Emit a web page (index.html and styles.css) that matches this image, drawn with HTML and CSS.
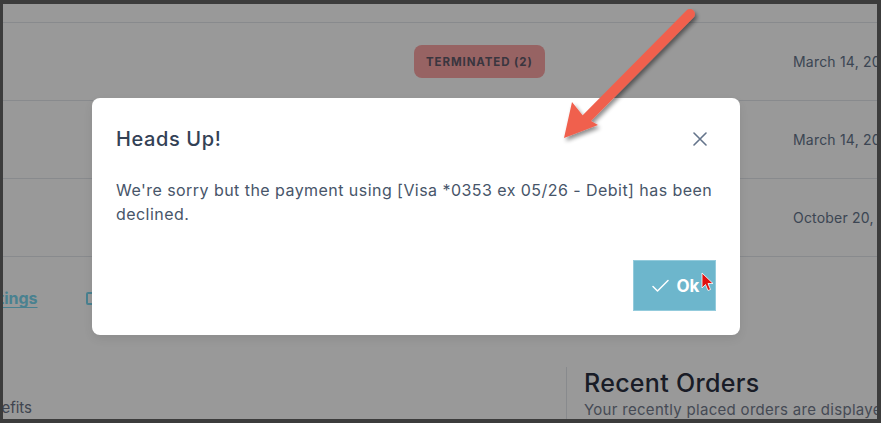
FILE: index.html
```html
<!DOCTYPE html>
<html lang="en">
<head>
<meta charset="utf-8">
<title>Heads Up</title>
<link rel="stylesheet" href="styles.css">
</head>
<body>
<div class="frame">
  <div class="page">
    <div class="table">
      <div class="row">
        <div class="cell"></div>
        <div class="cell"></div>
        <div class="cell date">Date (2)</div>
      </div>
      <div class="row">
        <div class="cell"></div>
        <div class="cell"><span class="badge">TERMINATED (2)</span></div>
        <div class="cell date">March 14, 2024</div>
      </div>
      <div class="row">
        <div class="cell"></div>
        <div class="cell"></div>
        <div class="cell date">March 14, 2024</div>
      </div>
      <div class="row">
        <div class="cell"></div>
        <div class="cell"></div>
        <div class="cell date">October 20, 2023</div>
      </div>
    </div>
    <div class="links">
      <a class="link" href="#">Settings</a>
      <span class="link-icon"></span>
    </div>
    <div class="columns">
      <div class="col-left">
        <div class="left-text">Benefits</div>
      </div>
      <div class="col-right">
        <h2 class="orders-title">Recent Orders</h2>
        <p class="orders-sub">Your recently placed orders are displayed here</p>
      </div>
    </div>
    <div class="overlay"></div>
    <div class="modal">
      <div class="modal-head">
        <h3 class="modal-title">Heads Up!</h3>
        <svg class="close" width="14" height="14" viewBox="0 0 14 14"><path d="M1 1L13 13M13 1L1 13" stroke="#64748b" stroke-width="1.6" stroke-linecap="round" fill="none"/></svg>
      </div>
      <p class="modal-body">We're sorry but the payment using [Visa *0353 ex 05/26 - Debit] has been declined.</p>
      <div class="modal-foot">
        <button class="ok">
          <svg width="17" height="14" viewBox="0 0 17 14"><path d="M1 7.5L5.5 12L16 1.5" stroke="#fff" stroke-width="1.5" fill="none" stroke-linecap="round" stroke-linejoin="round"/></svg>
          <span>Ok</span>
        </button>
      </div>
    </div>
  </div>
  <svg class="annot" width="881" height="423" viewBox="0 0 881 423">
    <defs>
      <filter id="sh" x="-20%" y="-20%" width="140%" height="140%">
        <feGaussianBlur in="SourceAlpha" stdDeviation="2"/>
        <feOffset dx="2" dy="3"/>
        <feComponentTransfer><feFuncA type="linear" slope="0.45"/></feComponentTransfer>
        <feMerge><feMergeNode/><feMergeNode in="SourceGraphic"/></feMerge>
      </filter>
    </defs>
    <g filter="url(#sh)">
      <path d="M690 14 L584 121" stroke="#f0604e" stroke-width="10" stroke-linecap="round" fill="none"/>
      <path d="M564 138 L572 102 L584 117 L598 125 Z" fill="#f0604e"/>
    </g>
    <path d="M702 273 L702 288 L705.5 284.5 L708 290.5 L710.5 289.5 L708 283.5 L713 283.5 Z" fill="#e01010" stroke="#fff" stroke-width="0.8"/>
  </svg>
</div>
</body>
</html>
```

FILE: styles.css
```css
* { box-sizing: border-box; }
html, body { margin: 0; padding: 0; }
body {
  background: #3c3c3c;
  font-family: Inter, "Noto Sans", "DejaVu Sans", sans-serif;
}
.frame {
  position: relative;
  width: 881px;
  height: 423px;
  padding: 4px 4px 4px 3px;
}
.page {
  position: relative;
  width: 874px;
  height: 415px;
  background: #fff;
  overflow: hidden;
}
.table { margin-top: -59px; }
.row {
  display: grid;
  grid-template-columns: 411px 379px 1fr;
  height: 78px;
  border-bottom: 1px solid #e3e6ec;
  align-items: center;
}
.cell { white-space: nowrap; }
.date {
  font-size: 14px;
  letter-spacing: 0.2px;
  color: #64748b;
}
.badge {
  display: inline-flex;
  align-items: center;
  height: 33px;
  padding: 0 12px;
  border-radius: 8px;
  background: #fca5a5;
  color: #625a6a;
  font-size: 11.5px;
  font-weight: 700;
  letter-spacing: 0.9px;
}
.links {
  display: flex;
  align-items: center;
  height: 80px;
  gap: 48px;
  padding-top: 2px;
}
.link {
  margin-left: -30px;
  font-size: 16px;
  font-weight: 700;
  color: #7ad8f0;
  text-decoration: underline;
  text-underline-offset: 3px;
}
.link-icon {
  width: 12px;
  height: 13px;
  border: 2px solid #7ad8f0;
  border-radius: 2px;
}
.columns {
  display: flex;
  margin-top: 30px;
}
.col-left {
  flex: none;
  width: 564px;
  border-right: 1px solid #e3e6ec;
  padding-top: 30px;
}
.left-text {
  margin-left: -29px;
  font-size: 15px;
  line-height: 22px;
  color: #6b7385;
}
.col-right { flex: none; padding-left: 17px; white-space: nowrap; }
.orders-title {
  margin: 0;
  font-size: 25px;
  line-height: 32px;
  font-weight: 500;
  letter-spacing: 0.3px;
  color: #2b3040;
}
.orders-sub {
  margin: 0;
  font-size: 15px;
  line-height: 22px;
  letter-spacing: 0.3px;
  color: #747c8e;
}
.overlay {
  position: absolute;
  inset: 0;
  background: rgba(0, 0, 0, 0.4);
}
.modal {
  position: absolute;
  left: 89px;
  top: 94px;
  width: 648px;
  height: 237px;
  background: #fff;
  border-radius: 8px;
  padding: 24px;
  box-shadow: 0 4px 10px rgba(0,0,0,0.08);
}
.modal-head {
  display: flex;
  align-items: center;
  justify-content: space-between;
  height: 34px;
  padding-right: 9px;
}
.modal-title {
  margin: 0;
  font-size: 20px;
  font-weight: 500;
  letter-spacing: 0.6px;
  color: #334155;
}
.modal-body {
  margin: 22px 0 0;
  font-size: 16px;
  line-height: 24px;
  letter-spacing: 0.45px;
  color: #475569;
}
.modal-foot {
  display: flex;
  justify-content: flex-end;
  margin-top: 34px;
}
.ok {
  display: flex;
  align-items: center;
  justify-content: center;
  gap: 8px;
  width: 83px;
  height: 51px;
  background: #6db6cc;
  border: 1px solid #93cbdc;
  color: #fff;
  font-family: inherit;
  font-size: 17px;
  font-weight: 700;
  padding: 0 0 0 2px;
}
.annot {
  position: absolute;
  left: 0;
  top: 0;
  pointer-events: none;
}
```
